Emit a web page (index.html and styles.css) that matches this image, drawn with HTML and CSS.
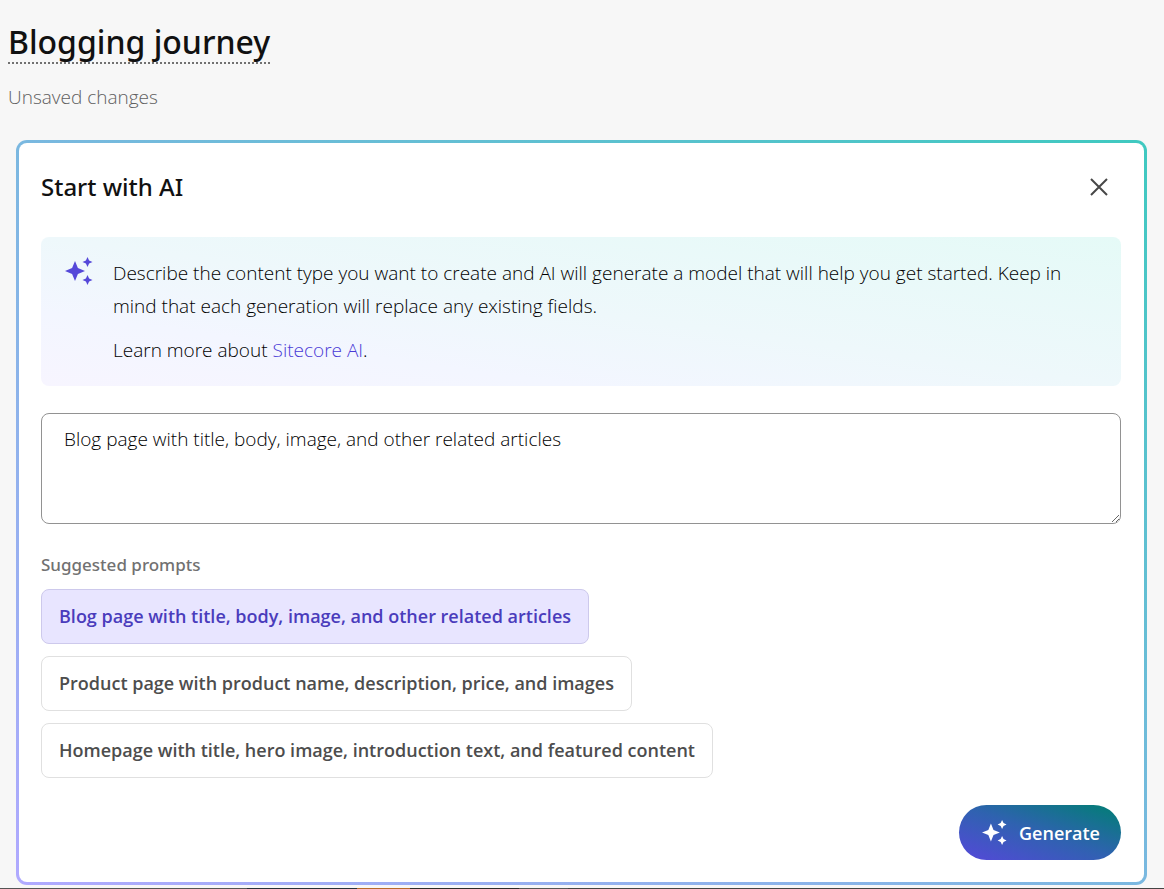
FILE: index.html
```html
<!DOCTYPE html>
<html lang="en">
<head>
<meta charset="utf-8">
<title>Blogging journey</title>
<link rel="stylesheet" href="styles.css">
</head>
<body>
<header class="page-header">
  <h1 class="page-title">Blogging journey</h1>
  <p class="page-status">Unsaved changes</p>
</header>
<main class="card">
  <div class="card-head">
    <h2 class="card-title">Start with AI</h2>
    <button class="close" type="button" aria-label="Close">
      <svg width="18" height="18" viewBox="0 0 18 18" fill="none" stroke="currentColor" stroke-width="2"><path d="M1 1 17 17M17 1 1 17"/></svg>
    </button>
  </div>
  <section class="notice">
    <svg class="sparkle" width="28" height="28" viewBox="0 0 28 28" fill="currentColor"><path d="M10 4 12.900 11.100 20 14 12.900 16.900 10 24 7.100 16.900 0 14 7.100 11.100ZM22.500 0 24.100 3.400 27.500 5 24.100 6.600 22.500 10 20.900 6.600 17.500 5 20.900 3.400ZM22.500 18 24.100 21.400 27.500 23 24.100 24.600 22.500 28 20.900 24.600 17.500 23 20.900 21.400Z"/></svg>
    <div class="notice-text">
      <p>Describe the content type you want to create and AI will generate a model that will help you get started. Keep in mind that each generation will replace any existing fields.</p>
      <p>Learn more about <a href="#">Sitecore AI</a>.</p>
    </div>
  </section>
  <textarea class="prompt" aria-label="Prompt">Blog page with title, body, image, and other related articles</textarea>
  <h3 class="prompts-title">Suggested prompts</h3>
  <div class="prompts">
    <button class="chip chip-selected" type="button">Blog page with title, body, image, and other related articles</button>
    <button class="chip" type="button">Product page with product name, description, price, and images</button>
    <button class="chip" type="button">Homepage with title, hero image, introduction text, and featured content</button>
  </div>
  <div class="actions">
    <button class="generate" type="button">
      <svg width="25" height="25" viewBox="0 0 28 28" fill="currentColor"><path d="M10 4 12.900 11.100 20 14 12.900 16.900 10 24 7.100 16.900 0 14 7.100 11.100ZM22.500 0 24.100 3.400 27.500 5 24.100 6.600 22.500 10 20.900 6.600 17.500 5 20.900 3.400ZM22.500 18 24.100 21.400 27.500 23 24.100 24.600 22.500 28 20.900 24.600 17.500 23 20.900 21.400Z"/></svg>
      Generate
    </button>
  </div>
</main>
<footer class="strip"></footer>
</body>
</html>
```
FILE: styles.css
```css
* { box-sizing: border-box; }
body {
  margin: 0;
  background: #f7f7f7;
  color: #111;
  font-family: "Open Sans", "Noto Sans", sans-serif;
  font-size: 19px;
}
h1, h2, h3, p { margin: 0; }
button, textarea { font: inherit; }
.page-header { padding: 22px 8px 0; }
.page-title {
  width: fit-content;
  border-bottom: 2px dotted #717171;
  font-family: "Noto Sans", "Open Sans", sans-serif;
  font-size: 32px;
  font-weight: 500;
  line-height: 40px;
}
.page-status {
  padding-top: 19px;
  color: #606060;
  font-weight: 300;
  line-height: 28px;
}
.card {
  margin: 29px 17px 0 16px;
  padding: 22px 23px 22px 22px;
  border: 3px solid transparent;
  border-radius: 11px;
  background: linear-gradient(#fff, #fff) padding-box,
    linear-gradient(to top right, #b0a9ff, #7ab8e0 50%, #3fc9c0) border-box;
}
.card-head {
  display: flex;
  justify-content: space-between;
  align-items: center;
  height: 44px;
}
.card-title {
  font-family: "Noto Sans", "Open Sans", sans-serif;
  font-size: 24px;
  font-weight: 500;
  line-height: 44px;
}
.close {
  display: flex;
  padding: 13px;
  border: 0;
  background: none;
  color: #474747;
}
.notice {
  display: flex;
  gap: 20px;
  margin-top: 28px;
  padding: 20px 24px 19px;
  border-radius: 8px;
  background: linear-gradient(to top right, #f7f5ff, #f3f6ff 25%, #eef8fb 50%, #e5faf7);
}
.sparkle { flex: none; color: #5548d9; }
.notice-text {
  display: grid;
  gap: 11px;
  color: #000;
  font-weight: 300;
  line-height: 33px;
}
.notice-text a { color: #4a3ad6; text-decoration: none; }
.prompt {
  display: block;
  width: 100%;
  height: 111px;
  margin-top: 27px;
  padding: 11px 22px;
  border: 1px solid #929292;
  border-radius: 8px;
  background: #fff;
  color: #000;
  font-weight: 300;
  line-height: 28px;
  resize: vertical;
}
.prompts-title {
  margin-top: 27px;
  color: #717171;
  font-family: "Noto Sans", "Open Sans", sans-serif;
  font-size: 17px;
  font-weight: 500;
  line-height: 28px;
}
.prompts {
  display: flex;
  flex-direction: column;
  align-items: flex-start;
  gap: 12px;
  margin-top: 10px;
}
.chip {
  padding: 13px 17px;
  border: 1px solid #e0e0e0;
  border-radius: 8px;
  background: #fff;
  color: #4d4d4d;
  font-size: 18px;
  font-weight: 600;
  line-height: 27px;
}
.chip-selected {
  border-color: #cdc9ec;
  background: #e8e5ff;
  color: #4a3cbc;
}
.actions {
  display: flex;
  justify-content: flex-end;
  margin-top: 27px;
}
.generate {
  display: flex;
  align-items: center;
  gap: 12px;
  height: 55px;
  padding: 0 21px 0 23px;
  border: 0;
  border-radius: 28px;
  background: linear-gradient(to top right, #5548d9, #2f62b0 50%, #007f73);
  color: #fff;
  font-size: 18px;
  font-weight: 600;
}
.strip {
  height: 1px;
  margin-top: 3px;
  background: linear-gradient(to right, #555 247px, #26303a 247px 357px, #b86a2c 357px 410px, #2b2b2b 410px 519px, #555 519px 568px, #444 568px);
}
```
